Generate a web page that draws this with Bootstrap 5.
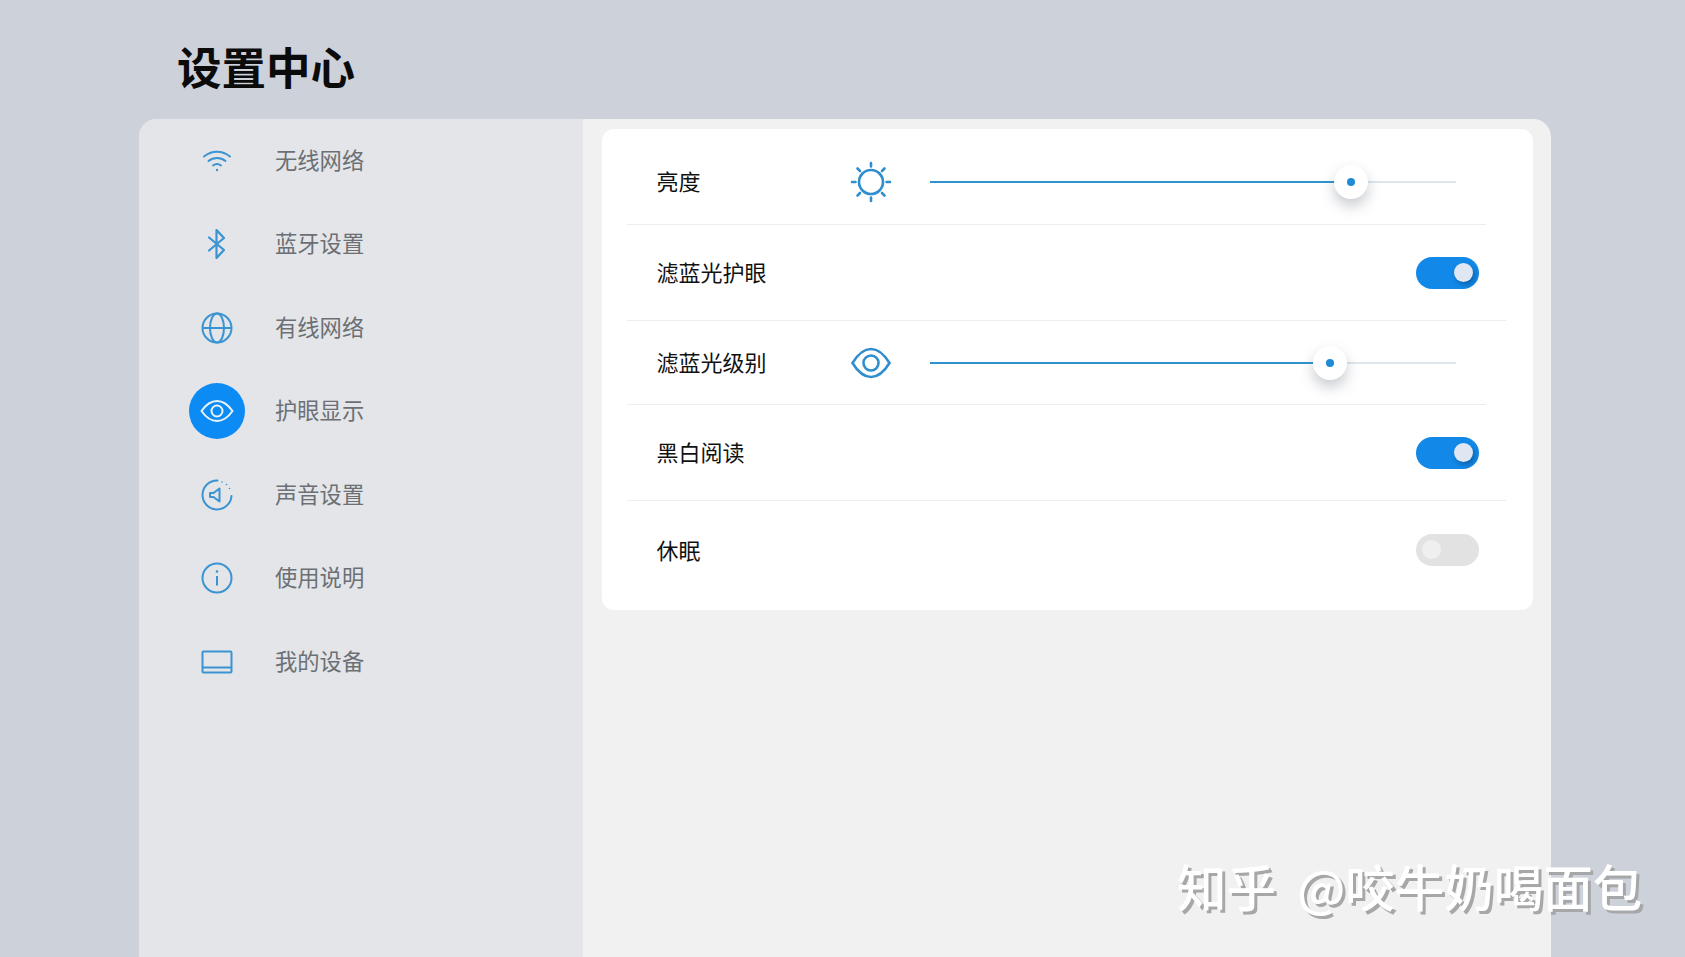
<!DOCTYPE html>
<html lang="zh">
<head>
<meta charset="utf-8">
<title>设置中心</title>
<link href="https://cdn.jsdelivr.net/npm/bootstrap@5.3.0/dist/css/bootstrap.min.css" rel="stylesheet">
<style>
html,body{height:100%;}
body{background:#cdd1da;font-family:"Noto Sans CJK SC","Liberation Sans",sans-serif;overflow:hidden;}
.page-wrap{height:957px;position:relative;}
.top-head{height:119px;padding-left:177px;}
.top-head h1{font-size:44.500px;font-weight:700;color:#0b0b0b;margin:0;line-height:1;padding-top:14px;}
.shell{margin-left:139px;margin-right:134px;height:838px;border-radius:18px 18px 0 0;overflow:hidden;background:#f1f1f2;}
.side{width:444px;flex:none;background:#e3e5e9;padding-left:50px;}
.side-item{height:83.5px;color:#6c7074;font-size:22.300px;gap:30px;}
.side-item span{padding-bottom:3px;}
.ico-wrap{width:56px;height:56px;border-radius:50%;flex:none;color:#3a93d2;}
.ico-wrap.on{background:#0d8bf4;color:#e8f3fb;}
.main-area{padding:10px 18px 0 19px;}
.set-card{background:#fff;border-radius:12px;height:481px;padding-left:25px;}
.set-row{font-size:22px;color:#111;border-bottom:1px solid #ebedf0;}
.set-row .lbl{padding-left:29.500px;padding-bottom:2px;display:inline-block;}
.r1{height:96px;margin-right:47px;padding-top:11px;}
.r1 .lbl{padding-bottom:3px;}
.r2{height:96px;margin-right:27px;}
.r3{height:84px;margin-right:47px;}
.r4{height:96px;margin-right:27px;}
.r5{height:108px;margin-right:27px;border-bottom:0!important;padding-bottom:10px;}
.lbl-w{width:223px;flex:none;}
.row-ico{width:80px;flex:none;color:#2f8fce;}
.track{width:526px;height:2px;background:#dce6ec;position:relative;}
.track-fill{height:2px;background:#2f93cf;}
.thumb{position:absolute;top:-16px;width:34px;height:34px;margin-left:-17px;border-radius:50%;background:#fff;box-shadow:0 7px 14px rgba(60,70,90,.28);}
.thumb::after{content:"";position:absolute;left:13px;top:13px;width:8px;height:8px;border-radius:50%;background:#1f8ad6;}
.tog{width:63px;height:32px;border-radius:16px;background:#1289e8;position:relative;margin-right:27px;}
.tog::after{content:"";position:absolute;right:6px;top:6px;width:19px;height:19px;border-radius:50%;background:#dfe8f2;box-shadow:2px 3px 5px rgba(10,50,100,.45);}
.tog.off{background:#e2e2e3;}
.tog.off::after{right:auto;left:6px;background:#efeff0;box-shadow:none;}
.wmark{position:absolute;left:1177px;top:850px;font-size:49.500px;word-spacing:10px;font-weight:500;line-height:72px;color:#fff;text-shadow:3px 3px 0 #a6a7a9;white-space:nowrap;}
</style>
</head>
<body>
<div class="page-wrap">
  <header class="top-head d-flex align-items-center"><h1>设置中心</h1></header>
  <div class="shell d-flex">
    <aside class="side">
      <div class="side-item d-flex align-items-center">
        <div class="ico-wrap d-flex align-items-center justify-content-center">
          <svg width="30" height="24" viewBox="0 0 30 24" fill="none" stroke="currentColor" stroke-width="2" stroke-linecap="round"><path d="M2 7.500C9.500 1 20.500 1 28 7.500"/><path d="M6.500 12c5-4 12-4 17 0"/><path d="M11 16.500c2.500-1.900 5.500-1.900 8 0"/><circle cx="15" cy="21" r="1.200" fill="currentColor" stroke="none"/></svg>
        </div><span>无线网络</span>
      </div>
      <div class="side-item d-flex align-items-center">
        <div class="ico-wrap d-flex align-items-center justify-content-center">
          <svg width="20" height="32" viewBox="0 0 20 32" fill="none" stroke="currentColor" stroke-width="2.200" stroke-linejoin="round" stroke-linecap="round"><path d="M2 9.500 17 22 9.500 30V2L17 10 2 22.500"/></svg>
        </div><span>蓝牙设置</span>
      </div>
      <div class="side-item d-flex align-items-center">
        <div class="ico-wrap d-flex align-items-center justify-content-center">
          <svg width="32" height="32" viewBox="0 0 32 32" fill="none" stroke="currentColor" stroke-width="2"><circle cx="16" cy="16" r="14.500"/><ellipse cx="16" cy="16" rx="7" ry="14.500"/><path d="M1.500 16h29"/></svg>
        </div><span>有线网络</span>
      </div>
      <div class="side-item d-flex align-items-center">
        <div class="ico-wrap on d-flex align-items-center justify-content-center">
          <svg width="34" height="24" viewBox="0 0 34 24" fill="none" stroke="currentColor" stroke-width="2"><path d="M1.500 12C6 5.500 11 2 17 2s11 3.500 15.500 10C28 18.500 23 22 17 22S6 18.500 1.500 12Z"/><circle cx="17" cy="12" r="5.500"/></svg>
        </div><span>护眼显示</span>
      </div>
      <div class="side-item d-flex align-items-center">
        <div class="ico-wrap d-flex align-items-center justify-content-center">
          <svg width="32" height="32" viewBox="0 0 32 32" fill="none" stroke="currentColor" stroke-width="2" stroke-linecap="round" stroke-linejoin="round"><path d="M16.500 1.500A14.500 14.500 0 1 0 30.500 17"/><path d="M18.500 9.500v13l-6-4.500H9v-4h3.500Z"/><circle cx="21" cy="3" r=".8" fill="currentColor" stroke="none"/><circle cx="25.500" cy="5.500" r=".8" fill="currentColor" stroke="none"/><circle cx="28.500" cy="9.500" r=".8" fill="currentColor" stroke="none"/></svg>
        </div><span>声音设置</span>
      </div>
      <div class="side-item d-flex align-items-center">
        <div class="ico-wrap d-flex align-items-center justify-content-center">
          <svg width="32" height="32" viewBox="0 0 32 32" fill="none" stroke="currentColor" stroke-width="2"><circle cx="16" cy="16" r="14.500"/><path d="M16 14v9.500"/><circle cx="16" cy="9.500" r="1.300" fill="currentColor" stroke="none"/></svg>
        </div><span>使用说明</span>
      </div>
      <div class="side-item d-flex align-items-center">
        <div class="ico-wrap d-flex align-items-center justify-content-center">
          <svg width="32" height="24" viewBox="0 0 32 24" fill="none" stroke="currentColor" stroke-width="2"><rect x="1.500" y="1.500" width="29" height="21" rx="1"/><path d="M1.500 17.500h29"/></svg>
        </div><span>我的设备</span>
      </div>
    </aside>
    <main class="main-area flex-grow-1">
      <div class="set-card">
        <div class="set-row r1 d-flex align-items-center">
          <div class="lbl-w"><span class="lbl">亮度</span></div>
          <div class="row-ico d-flex"><svg width="42" height="42" viewBox="0 0 42 42" fill="none" stroke="currentColor" stroke-width="2.600" stroke-linecap="round"><circle cx="21" cy="21" r="12"/><path d="M21 2v3.500M21 36.500V40M2 21h3.500M36.500 21H40M7.500 7.500l2.500 2.500M32 32l2.500 2.500M7.500 34.500 10 32M32 10l2.500-2.500"/></svg></div>
          <div class="track"><div class="track-fill" style="width:80%"></div><div class="thumb" style="left:80%"></div></div>
        </div>
        <div class="set-row r2 d-flex align-items-center justify-content-between">
          <span class="lbl">滤蓝光护眼</span><div class="tog"></div>
        </div>
        <div class="set-row r3 d-flex align-items-center">
          <div class="lbl-w"><span class="lbl">滤蓝光级别</span></div>
          <div class="row-ico d-flex"><svg width="42" height="32" viewBox="0 0 42 32" fill="none" stroke="currentColor" stroke-width="2.600"><path d="M2.500 16C8 7 14 2 21 2s13 5 18.500 14C34 25 28 30 21 30S8 25 2.500 16Z"/><circle cx="21" cy="16" r="7.500"/></svg></div>
          <div class="track"><div class="track-fill" style="width:76%"></div><div class="thumb" style="left:76%"></div></div>
        </div>
        <div class="set-row r4 d-flex align-items-center justify-content-between">
          <span class="lbl">黑白阅读</span><div class="tog"></div>
        </div>
        <div class="set-row r5 d-flex align-items-center justify-content-between">
          <span class="lbl">休眠</span><div class="tog off"></div>
        </div>
      </div>
    </main>
  </div>
  <div class="wmark">知乎 @咬牛奶喝面包</div>
</div>
<script src="https://cdn.jsdelivr.net/npm/bootstrap@5.3.0/dist/js/bootstrap.bundle.min.js"></script>
</body>
</html>
